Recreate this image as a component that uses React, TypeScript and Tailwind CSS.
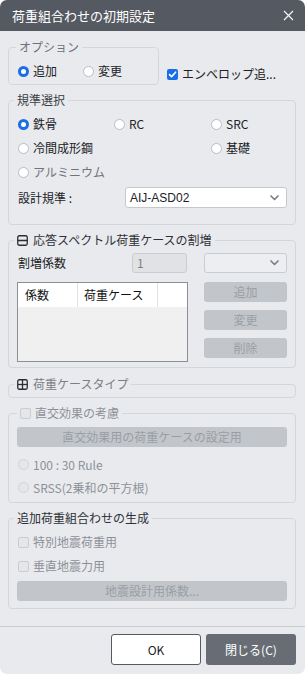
import React from "react";

const font = { fontFamily: '"Noto Sans CJK JP", "Noto Sans", "Liberation Sans", sans-serif' };

function Radio({ label, checked, disabled, muted }: { label: string; checked?: boolean; disabled?: boolean; muted?: boolean }) {
  return (
    <div className="flex items-center gap-[4px] h-full">
      {checked ? (
        <span className="w-[11px] h-[11px] rounded-full bg-[#1a6fe8] flex items-center justify-center">
          <span className="w-[5px] h-[5px] rounded-full bg-white" />
        </span>
      ) : (
        <span
          className={
            disabled
              ? "w-[11px] h-[11px] rounded-full border border-[#d0d3d8] bg-[#e4e6ea]"
              : "w-[11px] h-[11px] rounded-full border border-[#b8bcc2] bg-white"
          }
        />
      )}
      <span className={disabled ? "text-[#8d9197]" : muted ? "text-[#6f737a]" : "text-[#202226]"}>{label}</span>
    </div>
  );
}

function Check({ label, checked, disabled }: { label: string; checked?: boolean; disabled?: boolean }) {
  return (
    <div className="flex items-center gap-[4px] h-full">
      {checked ? (
        <span className="w-[11px] h-[11px] rounded-[2px] bg-[#1a6fe8] flex items-center justify-center">
          <svg width="9" height="9" viewBox="0 0 9 9" fill="none">
            <path d="M1.5 4.6 L3.6 6.6 L7.6 2.2" stroke="white" strokeWidth="1.6" strokeLinecap="round" strokeLinejoin="round" />
          </svg>
        </span>
      ) : (
        <span className="w-[11px] h-[11px] rounded-[2px] border border-[#c9ccd1] bg-[#e4e6ea]" />
      )}
      <span className={disabled ? "text-[#8d9197]" : "text-[#202226]"}>{label}</span>
    </div>
  );
}

function Chevron() {
  return (
    <svg width="9" height="6" viewBox="0 0 9 6" fill="none">
      <path d="M1 1 L4.5 4.5 L8 1" stroke="#7d8187" strokeWidth="1.7" strokeLinecap="round" strokeLinejoin="round" />
    </svg>
  );
}

function GrayButton({ label, className }: { label: string; className?: string }) {
  return (
    <div className={"h-5 rounded-[3px] bg-[#c2c6cb] text-[#9a9ea4] flex items-center justify-center " + (className ?? "")}>
      {label}
    </div>
  );
}

function BoxIcon({ plus }: { plus?: boolean }) {
  return (
    <svg width="11" height="11" viewBox="0 0 11 11" fill="none">
      <rect x="0.75" y="0.75" width="9.5" height="9.5" rx="1.5" stroke="#2a2d31" strokeWidth="1.3" />
      <path d="M0.75 5.5 H10.25" stroke="#2a2d31" strokeWidth="1.3" />
      {plus && <path d="M5.5 0.75 V10.25" stroke="#2a2d31" strokeWidth="1.3" />}
    </svg>
  );
}

export default function App() {
  return (
    <div className="bg-white w-[305px] h-[674px]" style={font}>
      <div className="w-[305px] h-[674px] rounded-[7px] overflow-hidden bg-[#e9eaee] flex flex-col text-[12px] leading-4">
        {/* title bar */}
        <div className="h-[31px] bg-[#555a62] flex items-center justify-between pl-3 pr-[11px]">
          <span className="text-white text-[13px]">荷重組合わせの初期設定</span>
          <svg width="11" height="11" viewBox="0 0 11 11" fill="none">
            <path d="M1 1 L10 10 M10 1 L1 10" stroke="#f2f3f5" strokeWidth="1.2" />
          </svg>
        </div>

        <div className="pl-2 pr-[9px] pt-2 flex flex-col">
          {/* options */}
          <div className="flex items-end">
            <fieldset className="w-[151px] border border-[#d3d6db] rounded-[4px] pl-[9px] pt-2 pb-[5px]">
              <legend className="px-[3px] -ml-[2px] text-[12px] leading-4 text-[#6d7178]">オプション</legend>
              <div className="flex h-4">
                <div className="w-[65px]">
                  <Radio label="追加" checked />
                </div>
                <Radio label="変更" />
              </div>
            </fieldset>
            <div className="h-4 ml-[8px] mb-[3px]">
              <Check label="エンベロップ追..." checked />
            </div>
          </div>

          {/* standard */}
          <fieldset className="mt-[7px] border border-[#d3d6db] rounded-[4px] pl-[9px] pr-2 pt-1 pb-4">
            <legend className="px-[3px] -ml-[4px] leading-4 text-[#3b3f45]">規準選択</legend>
            <div className="grid grid-cols-[96px_97px_1fr] grid-rows-[24px_24px_24px]">
              <Radio label="鉄骨" checked />
              <Radio label="RC" />
              <Radio label="SRC" />
              <div className="col-span-2">
                <Radio label="冷間成形鋼" />
              </div>
              <Radio label="基礎" />
              <div className="col-span-3">
                <Radio label="アルミニウム" muted />
              </div>
            </div>
            <div className="mt-[3px] h-[21px] flex items-center">
              <span className="w-[107px] text-[#202226]">設計規準 :</span>
              <div className="flex-1 h-[21px] bg-white border border-[#c5c8cd] rounded-[3px] flex items-center justify-between pl-[4px] pr-[7px]">
                <span className="text-[#202226]" style={{ fontFamily: '"Liberation Sans", sans-serif' }}>AIJ-ASD02</span>
                <Chevron />
              </div>
            </div>
          </fieldset>

          {/* response spectrum */}
          <fieldset className="mt-[7px] border border-[#d3d6db] rounded-[4px] px-2 pt-[5px] pb-[5px]">
            <legend className="px-[3px] -ml-[3px] leading-4 text-[#2e3136] flex items-center gap-[5px]">
              <BoxIcon />
              <span>応答スペクトル荷重ケースの割増</span>
            </legend>
            <div className="flex gap-4">
              <div className="w-[171px] flex flex-col">
                <div className="h-5 flex items-center">
                  <span className="ml-[1px] text-[#202226]">割増係数</span>
                  <div className="ml-auto mr-[1px] w-[55px] h-5 bg-[#e0e2e6] border border-[#c9ccd1] rounded-[3px] flex items-center pl-[4px] text-[#7c8087]">
                    1
                  </div>
                </div>
                <div className="mt-[9px] h-[80px] border border-[#8b8f96] bg-[#f0f0f0] flex flex-col">
                  <div className="h-[24px] bg-white grid grid-cols-[60px_80px_1fr] text-[#111]">
                    <div className="border-r border-[#e2e2e2] pl-[7px] flex items-center">係数</div>
                    <div className="border-r border-[#e2e2e2] pl-[6px] flex items-center">荷重ケース</div>
                    <div />
                  </div>
                </div>
              </div>
              <div className="flex-1 flex flex-col">
                <div className="h-5 border border-[#c9ccd1] rounded-[3px] bg-[#eceef1] flex items-center justify-end pr-[7px]">
                  <Chevron />
                </div>
                <GrayButton label="追加" className="mt-[9px]" />
                <GrayButton label="変更" className="mt-2" />
                <GrayButton label="削除" className="mt-2" />
              </div>
            </div>
          </fieldset>

          {/* load case type */}
          <fieldset className="mt-2 border border-[#d3d6db] rounded-[4px] px-2 pb-[5px]">
            <legend className="px-[3px] -ml-[3px] leading-4 text-[#7a7e85] flex items-center gap-[5px]">
              <BoxIcon plus />
              <span>荷重ケースタイプ</span>
            </legend>
          </fieldset>

          {/* orthogonal effect */}
          <fieldset className="mt-[7px] border border-[#d3d6db] rounded-[4px] px-2 pt-[6px] pb-[3px]">
            <legend className="px-[3px] leading-4 h-4">
              <Check label="直交効果の考慮" disabled />
            </legend>
            <GrayButton label="直交効果用の荷重ケースの設定用" />
            <div className="mt-[6px] h-[23px] pl-[1px]">
              <Radio label="100 : 30 Rule" disabled />
            </div>
            <div className="h-[23px] pl-[1px]">
              <Radio label="SRSS(2乗和の平方根)" disabled />
            </div>
          </fieldset>

          {/* additional */}
          <fieldset className="mt-[7px] border border-[#d3d6db] rounded-[4px] px-2 pt-1 pb-[7px]">
            <legend className="px-[3px] -ml-[3px] leading-4 text-[#2e3136]">追加荷重組合わせの生成</legend>
            <div className="h-6 pl-[1px]">
              <Check label="特別地震荷重用" disabled />
            </div>
            <div className="h-6 pl-[1px]">
              <Check label="垂直地震力用" disabled />
            </div>
            <GrayButton label="地震設計用係数..." className="mt-[3px]" />
          </fieldset>
        </div>

        {/* footer */}
        <div className="mt-auto border-t border-[#c9ccd1] pt-[7px] pb-[9px] pr-[9px] flex justify-end gap-[5px]">
          <div className="w-[90px] h-[31px] bg-white border border-[#555a62] rounded-[3px] flex items-center justify-center text-[#202226]">
            OK
          </div>
          <div className="w-[90px] h-[31px] bg-[#686d75] rounded-[3px] flex items-center justify-center text-white">
            閉じる(C)
          </div>
        </div>
      </div>
    </div>
  );
}
